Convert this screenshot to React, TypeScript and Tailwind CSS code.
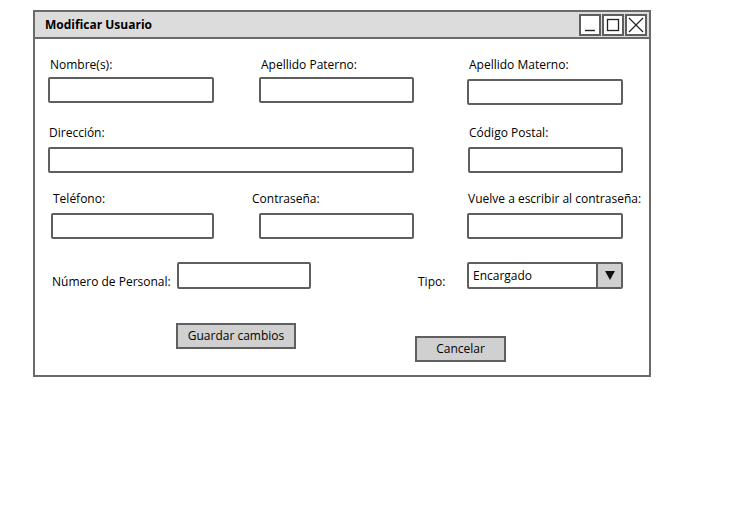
const font = { fontFamily: '"Open Sans", "DejaVu Sans", sans-serif' }

const Field = ({ label, w, labelPl = 'pl-[1px]', gap = 'mt-[5px]' }: { label: string; w: string; labelPl?: string; gap?: string }) => (
  <div className="flex flex-col">
    <span className={`text-[12px] leading-[14px] text-black ${labelPl}`}>{label}</span>
    <div className={`${gap} ${w} h-[26px] bg-white border-2 border-[#5f5f5f] rounded-[2px]`} />
  </div>
)

const WinBtn = ({ children }: { children: React.ReactNode }) => (
  <div className="w-[22px] h-[22px] border-2 border-[#5f5f5f] bg-white flex items-center justify-center">
    {children}
  </div>
)

export default function App() {
  return (
    <div className="w-[733px] h-[520px] bg-white pt-[10px] pl-[33px]" style={font}>
      <div className="w-[618px] h-[367px] border-2 border-[#6a6a6a] flex flex-col">
        {/* Title bar */}
        <div className="h-[27px] bg-[#dcdcdc] border-b-2 border-[#6a6a6a] flex items-center justify-between pl-[10px] pr-[2px]">
          <span className="text-[12px] font-bold text-black">Modificar Usuario</span>
          <div className="flex gap-[1px]">
            <WinBtn>
              <svg width="14" height="14" viewBox="0 0 14 14"><path d="M2 12.5 H12" stroke="#222" strokeWidth="1.4" /></svg>
            </WinBtn>
            <WinBtn>
              <svg width="14" height="14" viewBox="0 0 14 14"><rect x="1.5" y="1.5" width="11" height="11" fill="none" stroke="#222" strokeWidth="1.3" /></svg>
            </WinBtn>
            <WinBtn>
              <svg width="16" height="16" viewBox="0 0 16 16"><path d="M1 1 L15 15 M15 1 L1 15" stroke="#222" strokeWidth="1.2" /></svg>
            </WinBtn>
          </div>
        </div>

        {/* Row 1 */}
        <div className="flex mt-[19px] ml-[13px]">
          <Field label="Nombre(s):" w="w-[166px]" labelPl="pl-[2px]" />
          <div className="ml-[45px]">
            <Field label="Apellido Paterno:" w="w-[155px]" labelPl="pl-[2px]" />
          </div>
          <div className="ml-[53px]">
            <Field label="Apellido Materno:" w="w-[156px]" labelPl="pl-[2px]" gap="mt-[7px]" />
          </div>
        </div>

        {/* Row 2 */}
        <div className="flex mt-[21px] ml-[13px]">
          <Field label="Dirección:" w="w-[366px]" gap="mt-[7px]" />
          <div className="ml-[54px]">
            <Field label="Código Postal:" w="w-[155px]" gap="mt-[7px]" />
          </div>
        </div>

        {/* Row 3 */}
        <div className="flex mt-[19px] ml-[16px]">
          <Field label="Teléfono:" w="w-[163px]" labelPl="pl-[2px]" gap="mt-[7px]" />
          <div className="ml-[38px] flex flex-col">
            <span className="text-[12px] leading-[14px] text-black">Contraseña:</span>
            <div className="mt-[7px] ml-[7px] w-[155px] h-[26px] bg-white border-2 border-[#5f5f5f] rounded-[2px]" />
          </div>
          <div className="ml-[53px]">
            <Field label="Vuelve a escribir al contraseña:" w="w-[156px]" labelPl="pl-[1px]" gap="mt-[7px]" />
          </div>
        </div>

        {/* Row 4 */}
        <div className="flex items-start mt-[23px] ml-[17px]">
          <span className="text-[12px] leading-[14px] text-black mt-[13px] w-[125px]">Número de Personal:</span>
          <div className="w-[134px] h-[27px] bg-white border-2 border-[#5f5f5f] rounded-[2px]" />
          <span className="text-[12px] leading-[14px] text-black mt-[13px] ml-[107px] w-[49px]">Tipo:</span>
          <div className="w-[156px] h-[27px] bg-white border-2 border-[#5f5f5f] rounded-[2px] flex">
            <span className="flex-1 text-[12px] leading-[14px] text-black pl-[4px] pt-[5px]">Encargado</span>
            <div className="w-[25px] h-full bg-[#d0d0d0] border-l-2 border-[#5f5f5f] flex items-center justify-center">
              <svg width="10" height="9" viewBox="0 0 10 9"><path d="M0 0 H10 L5 9 Z" fill="#111" /></svg>
            </div>
          </div>
        </div>

        {/* Buttons */}
        <div className="flex items-start mt-[34px] ml-[141px]">
          <button className="w-[120px] h-[26px] bg-[#d0d0d0] border-2 border-[#5f5f5f] text-[12px] text-black">Guardar cambios</button>
          <button className="w-[91px] h-[26px] bg-[#d0d0d0] border-2 border-[#5f5f5f] text-[12px] text-black ml-[119px] mt-[13px]">Cancelar</button>
        </div>
      </div>
    </div>
  )
}
